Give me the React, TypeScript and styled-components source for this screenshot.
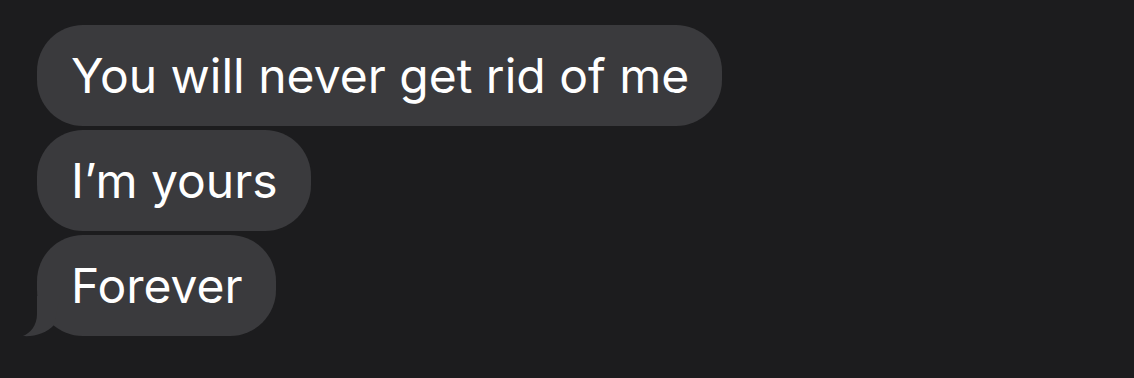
import React from "react";
import styled, { createGlobalStyle } from "styled-components";

const Global = createGlobalStyle`
  html, body {
    margin: 0;
    padding: 0;
    background: #1c1c1e;
  }
  body {
    width: 1134px;
    height: 378px;
    overflow: hidden;
    font-family: Inter, "Liberation Sans", Arial, sans-serif;
  }
`;

const Thread = styled.div`
  display: flex;
  flex-direction: column;
  align-items: flex-start;
  gap: 4px;
  padding: 25px 0 0 37px;
`;

const Bubble = styled.div`
  position: relative;
  box-sizing: border-box;
  height: 101px;
  display: flex;
  align-items: center;
  padding: 0 33px 0 34px;
  border-radius: 46px;
  background: #3a3a3d;
  color: #ffffff;
  font-size: 48px;
  font-weight: 400;
  white-space: nowrap;
`;

const Text = styled.span`
  position: relative;
`;

const Tail = styled.svg`
  position: absolute;
  left: -17px;
  bottom: 0;
  width: 60px;
  height: 50px;
  overflow: visible;
`;

const messages = ["You will never get rid of me", "I\u2019m yours", "Forever"];

export default function App() {
  return (
    <>
      <Global />
      <Thread>
        {messages.map((m, i) => (
          <Bubble key={i}>
            {i === messages.length - 1 && (
              <Tail viewBox="0 0 60 50">
                <path
                  d="M17 10 L17 28 C17 40 10 47 3 50 C14 51 27 47 34 39 L40 10 Z"
                  fill="#3a3a3d"
                />
              </Tail>
            )}
            <Text>{m}</Text>
          </Bubble>
        ))}
      </Thread>
    </>
  );
}
